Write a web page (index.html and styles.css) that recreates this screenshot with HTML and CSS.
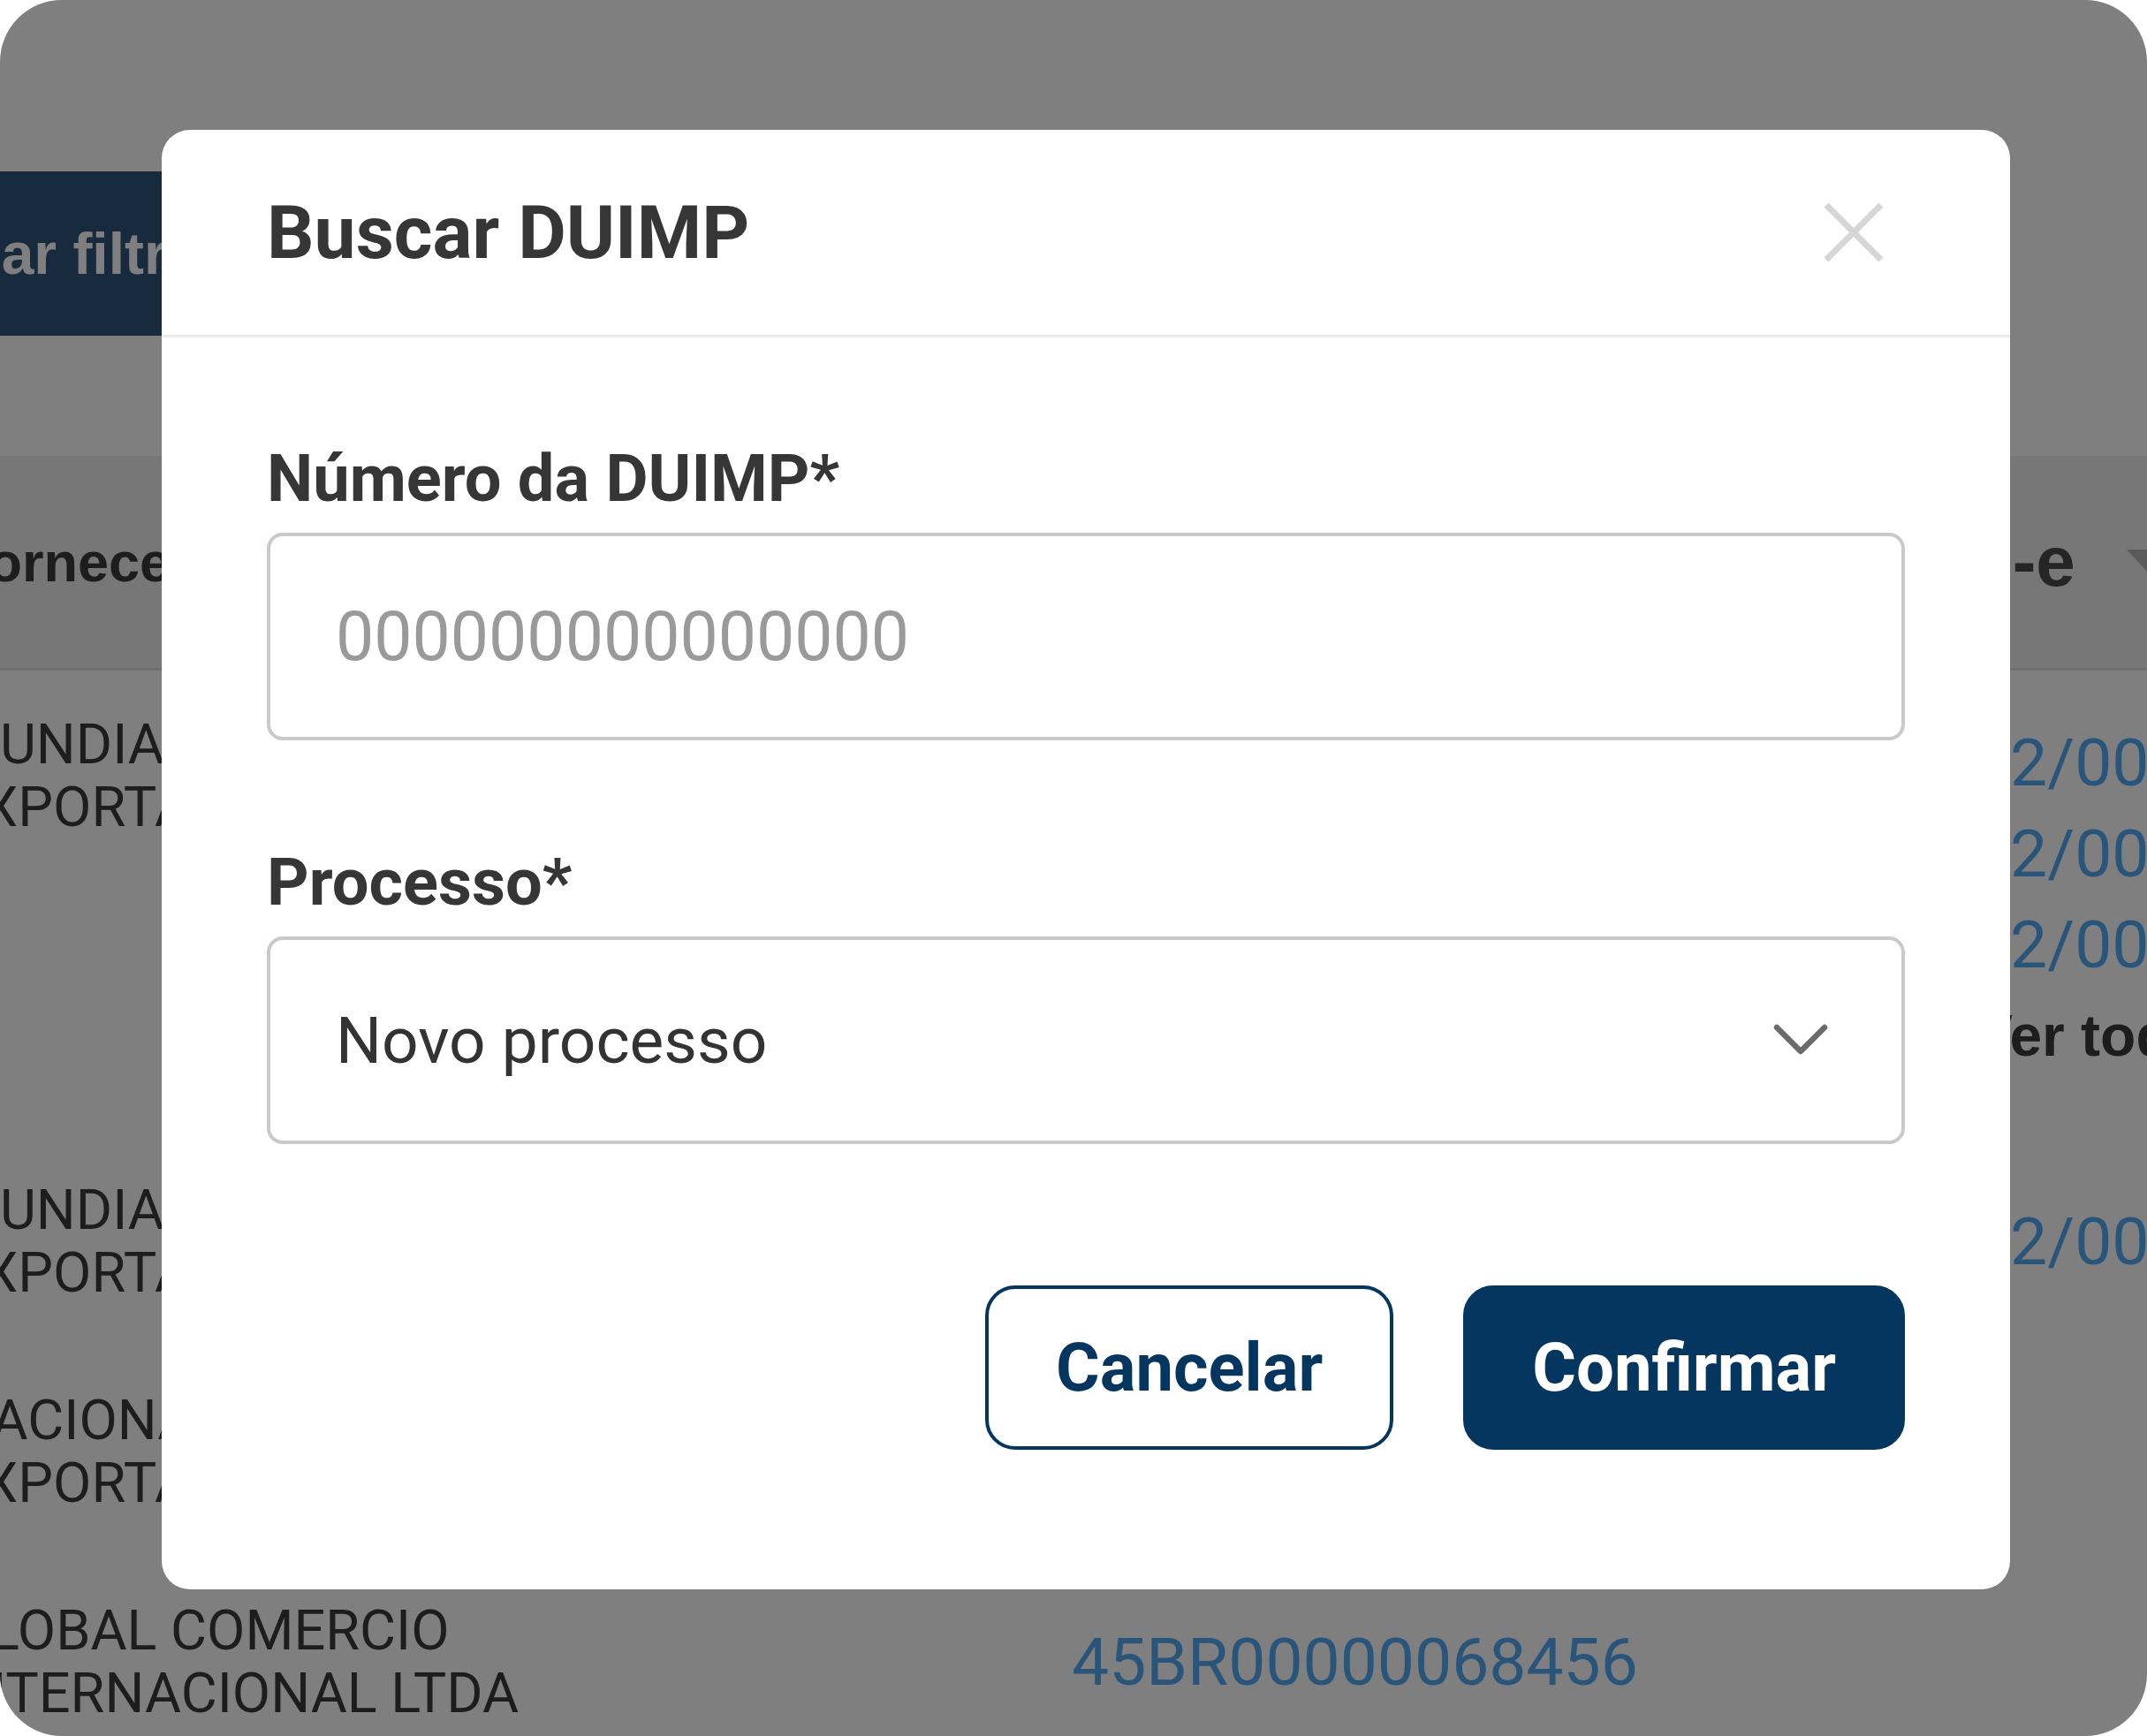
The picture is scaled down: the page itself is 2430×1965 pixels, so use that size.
FILE: index.html
```html
<!DOCTYPE html>
<html lang="pt-BR">
<head>
  <meta charset="utf-8">
  <title>Buscar DUIMP</title>
  <link rel="stylesheet" href="styles.css">
</head>
<body>
  <div class="screen">
    <div class="page">
      <div class="toolbar">
        <button class="filter-btn">Limpar filtros</button>
      </div>

      <div class="table">
        <div class="table-head">
          <div class="col col-name">Fornecedor</div>
          <div class="col col-duimp">DUIMP</div>
          <div class="col col-nfe">NF-e <span class="sort-icon"></span></div>
        </div>

        <div class="table-row row-top">
          <div class="col col-name">MUNDIAL EXPORTADORA</div>
          <div class="col col-duimp link">45BR00000068120</div>
          <div class="col col-nfe">
            <span class="link">0.12/0001</span>
            <span class="link">0.12/0002</span>
            <span class="link">0.12/0003</span>
            <span class="see-all">Ver todos</span>
          </div>
        </div>

        <div class="table-row">
          <div class="col col-name">MUNDIAL EXPORTADORA</div>
          <div class="col col-duimp link">45BR00000068231</div>
          <div class="col col-nfe">
            <span class="link">0.12/0004</span>
          </div>
        </div>

        <div class="table-row">
          <div class="col col-name">NACIONAL EXPORTADORA</div>
          <div class="col col-duimp link">45BR00000068344</div>
          <div class="col col-nfe"></div>
        </div>

        <div class="table-row">
          <div class="col col-name">GLOBAL COMERCIO INTERNACIONAL LTDA</div>
          <div class="col col-duimp link">45BR00000068456</div>
          <div class="col col-nfe"></div>
        </div>
      </div>
    </div>

    <div class="overlay"></div>

    <div class="modal">
      <div class="modal-header">
        <h2 class="modal-title">Buscar DUIMP</h2>
        <button class="close-btn" aria-label="Fechar">
          <svg width="68" height="68" viewBox="0 0 68 68">
            <path d="M3 3 L65 65 M65 3 L3 65" stroke="#d6d6d6" stroke-width="7" fill="none"/>
          </svg>
        </button>
      </div>

      <div class="modal-body">
        <div class="field">
          <label class="field-label" for="duimp">Número da DUIMP*</label>
          <input id="duimp" class="field-input" type="text" placeholder="000000000000000">
        </div>

        <div class="field">
          <label class="field-label">Processo*</label>
          <div class="field-input select">
            <span>Novo processo</span>
            <svg width="62" height="38" viewBox="0 0 62 38">
              <path d="M4 4 L31 31 L58 4" stroke="#6b6b6b" stroke-width="6.5" stroke-linecap="round" stroke-linejoin="round" fill="none"/>
            </svg>
          </div>
        </div>

        <div class="actions">
          <button class="btn btn-outline">Cancelar</button>
          <button class="btn btn-primary">Confirmar</button>
        </div>
      </div>
    </div>
  </div>
</body>
</html>
```

FILE: styles.css
```css
* {
  box-sizing: border-box;
}

body {
  margin: 0;
  background: #fff;
  font-family: Roboto, "Liberation Sans", sans-serif;
}

.screen {
  position: relative;
  width: 2430px;
  height: 1965px;
  border-radius: 70px;
  overflow: hidden;
  background: #fff;
}

/* page behind the dialog */

.page {
  padding-top: 194px;
}

.toolbar {
  height: 186px;
}

.filter-btn {
  height: 186px;
  margin-left: -216px;
  padding: 0 60px;
  border: none;
  border-radius: 0 24px 24px 0;
  background: #2e547c;
  color: #fff;
  font-family: "Liberation Sans", Arial, sans-serif;
  font-size: 66px;
  font-weight: 700;
}

.table {
  margin-top: 136px;
  margin-left: -52px;
}

.table-head,
.table-row {
  display: grid;
  grid-template-columns: 1265px 958px 1fr;
}

.table-head {
  height: 243px;
  align-items: center;
  background: #eeeeee;
  border-bottom: 3px solid #dcdcdc;
  font-family: "Liberation Sans", Arial, sans-serif;
  font-size: 80px;
  font-weight: 700;
  color: #4a4a4a;
}

.sort-icon {
  display: inline-block;
  margin-left: 58px;
  border-left: 26px solid transparent;
  border-right: 26px solid transparent;
  border-top: 28px solid #b4b4b4;
}

.table-row {
  padding: 48px 0;
  align-items: center;
}

.table-row.row-top {
  align-items: start;
}

.col-name {
  width: 710px;
  font-size: 63px;
  line-height: 71px;
  color: #3a3a3a;
}

.table-row .col-name {
  margin-left: -3px;
}

.link {
  font-size: 75px;
  line-height: 103px;
  color: #52aaf5;
  white-space: nowrap;
}

.col-nfe {
  display: flex;
  flex-direction: column;
}

.row-top .col-nfe {
  padding-top: 5px;
}

.table-head .col-nfe {
  flex-direction: row;
  align-items: center;
  white-space: nowrap;
}

.see-all {
  padding-left: 63px;
  padding-bottom: 14px;
  font-family: "Liberation Sans", Arial, sans-serif;
  font-size: 66px;
  font-weight: 700;
  line-height: 103px;
  color: #3a3a3a;
  white-space: nowrap;
}

.overlay {
  position: absolute;
  inset: 0;
  background: rgba(0, 0, 0, 0.5);
}

/* dialog */

.modal {
  position: absolute;
  left: 183px;
  top: 147px;
  width: 2092px;
  background: #fff;
  border-radius: 32px;
}

.modal-header {
  height: 235px;
  display: flex;
  align-items: center;
  justify-content: space-between;
  padding: 0 143px 0 119px;
  border-bottom: 3px solid #ececec;
}

.modal-title {
  margin: 0;
  font-size: 84px;
  font-weight: 700;
  color: #363636;
}

.close-btn {
  padding: 0;
  border: none;
  background: none;
  display: flex;
}

.modal-body {
  padding: 117px 119px 158px;
}

.field + .field {
  margin-top: 118px;
}

.field-label {
  display: block;
  margin-bottom: 18px;
  font-size: 74px;
  font-weight: 700;
  line-height: 86px;
  color: #363636;
}

.field-input {
  display: block;
  width: 100%;
  height: 235px;
  padding: 0 74px;
  border: 4px solid #c9c9c9;
  border-radius: 18px;
  background: #fff;
  font-family: Roboto, sans-serif;
  font-size: 77px;
  color: #333;
  outline: none;
}

.field-input::placeholder {
  color: #9a9a9a;
}

.select {
  display: flex;
  align-items: center;
  justify-content: space-between;
  padding-right: 83px;
  font-size: 73px;
}

.actions {
  display: flex;
  justify-content: flex-end;
  gap: 79px;
  margin-top: 160px;
}

.btn {
  height: 186px;
  padding: 0 76px;
  border: 4px solid #04365f;
  border-radius: 34px;
  font-family: Roboto, sans-serif;
  font-size: 76px;
  font-weight: 700;
}

.btn-outline {
  background: #fff;
  color: #04365f;
}

.btn-primary {
  padding: 0 74px;
  background: #04365f;
  color: #fff;
}
```
